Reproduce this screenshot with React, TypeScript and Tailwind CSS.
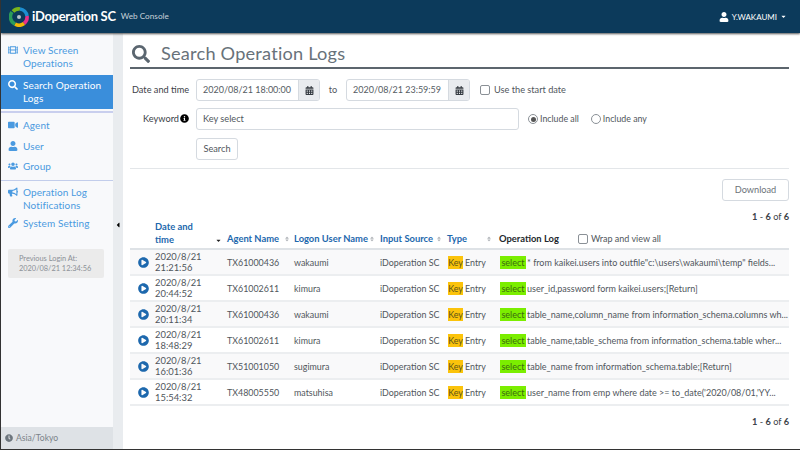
import React from "react";
import { FaSearch, FaFilm, FaVideo, FaUser, FaUsers, FaBullhorn, FaWrench, FaClock, FaCalendarAlt, FaInfoCircle, FaPlayCircle, FaCaretDown, FaSort, FaCaretLeft } from "react-icons/fa";

const rows = [
  ["2020/8/21", "21:21:56", "TX61000436", "wakaumi", "* from kaikei.users into outfile\"c:\\users\\wakaumi\\temp\" fields..."],
  ["2020/8/21", "20:44:52", "TX61002611", "kimura", "user_id,password form kaikei.users;[Return]"],
  ["2020/8/21", "20:11:34", "TX61000436", "wakaumi", "table_name,column_name from information_schema.columns wh..."],
  ["2020/8/21", "18:48:29", "TX61002611", "kimura", "table_name,table_schema from information_schema.table wher..."],
  ["2020/8/21", "16:01:36", "TX51001050", "sugimura", "table_name from information_schema.table;[Return]"],
  ["2020/8/21", "15:54:32", "TX48005550", "matsuhisa", "user_name from emp where date >= to_date('2020/08/01,'YY..."],
];

function Logo() {
  return (
    <svg width="20" height="20" viewBox="0 0 20 20" fill="none" strokeWidth="3.6">
      <path d="M4 4.5 A8 8 0 0 1 11 2" stroke="#7ab51d" />
      <path d="M11 2 A8 8 0 0 1 18 9" stroke="#1d8ed1" />
      <path d="M18 9 A8 8 0 0 1 15 16.5" stroke="#e8318a" />
      <path d="M15 16.5 A8 8 0 0 1 6 17" stroke="#f2b705" />
      <path d="M6 17 A8 8 0 0 1 3 5" stroke="#2b9c5a" />
      <circle cx="10" cy="10" r="2" fill="#b9c4cc" />
    </svg>
  );
}

function Nav({ icon, children, active }: { icon: React.ReactNode; children: React.ReactNode; active?: boolean }) {
  return (
    <div className={`flex pl-[7px] pr-1 py-[4px] leading-[13px] text-[10px] tracking-[0.1px] ${active ? "bg-[#3a8edb] text-white" : "text-[#4a9ae0]"}`}>
      <span className="w-[15px] shrink-0 pt-[1px] text-[10px]">{icon}</span>
      <span>{children}</span>
    </div>
  );
}

function DateInput({ value }: { value: string }) {
  return (
    <div className="flex h-[22px] w-[124px] rounded-[3px] border border-[#d5dae0] overflow-hidden">
      <div className="flex-1 pl-[6px] leading-[20px] text-[9px] text-[#555c63] whitespace-nowrap">{value}</div>
      <div className="w-[21px] bg-[#e9ecef] border-l border-[#d5dae0] flex items-center justify-center text-[#343a40] text-[9px]">
        <FaCalendarAlt />
      </div>
    </div>
  );
}

function Head({ children, right }: { children: React.ReactNode; right: string }) {
  return (
    <th className="font-bold relative whitespace-nowrap text-[9.4px] pb-[3px]">
      {children}
      <FaSort className={`absolute bottom-[6px] text-[6px] text-[#b0b4b8] ${right}`} />
    </th>
  );
}

export default function App() {
  return (
    <div className="w-[800px] h-[450px] overflow-hidden bg-white flex flex-col border-l border-b border-[#333] text-[9.2px] text-[#50565c] whitespace-nowrap" style={{ fontFamily: 'Lato, "Noto Sans", sans-serif' }}>
      <header className="h-[33px] shrink-0 bg-[#0c3a5b] shadow-[0_1px_2px_#555] z-10 flex items-center pl-[8px] pr-[13px] text-white">
        <Logo />
        <span className="ml-[3px] text-[13px] font-bold tracking-[-0.3px]">iDoperation SC</span>
        <span className="ml-[5px] text-[8.2px] text-[#c8d2da]">Web Console</span>
        <div className="ml-auto flex items-center gap-[3px] text-[8px]">
          <FaUser className="text-[10px]" />
          <span>Y.WAKAUMI</span>
          <FaCaretDown className="text-[7px]" />
        </div>
      </header>
      <div className="flex flex-1 min-h-0">
        <aside className="w-[112px] shrink-0 bg-[#f8f9fb] flex flex-col whitespace-normal">
          <div className="pt-[7px]">
            <Nav icon={<FaFilm />}>View Screen Operations</Nav>
          </div>
          <div className="mt-[1px] pb-[2px] border-b-[2px] border-[#c9cfee]">
            <Nav active icon={<FaSearch />}>Search Operation Logs</Nav>
          </div>
          <div className="mt-[2px] pb-[3.5px] border-b border-[#c2cdeb]">
            <div className="h-[20.5px]"><Nav icon={<FaVideo />}>Agent</Nav></div>
            <div className="h-[20.5px]"><Nav icon={<FaUser />}>User</Nav></div>
            <div className="h-[20.5px]"><Nav icon={<FaUsers />}>Group</Nav></div>
          </div>
          <div className="pt-[1px]">
            <Nav icon={<FaBullhorn />}>Operation Log Notifications</Nav>
            <div className="-mt-[3px]"><Nav icon={<FaWrench />}>System Setting</Nav></div>
          </div>
          <div className="ml-[7px] mr-[9px] mt-[15px] h-[29px] rounded-[2px] bg-[#ebebeb] pl-[11px] text-[7.4px] leading-[10px] pt-[5px] text-[#8b9197]">
            <div>Previous Login At:</div>
            <div>2020/08/21 12:34:56</div>
          </div>
          <div className="mt-auto h-[22px] bg-[#dee2e6] flex items-center gap-[3px] pl-[4px] text-[8.6px] text-[#7b8389]">
            <FaClock className="text-[8px] text-[#6c757d]" />
            <span>Asia/Tokyo</span>
          </div>
        </aside>
        <div className="w-[10px] shrink-0 bg-[#e9ecef] flex items-center justify-center text-[8px] text-black">
          <FaCaretLeft className="mt-[-32px]" />
        </div>
        <main className="flex-1 min-w-0 pl-[7px] pr-[11px] pt-[8px]">
          <div className="h-[28px] border-b-2 border-[#5c656d] flex items-center text-[#68727a]">
            <FaSearch className="text-[18px] text-[#5b6670] ml-[2px]" />
            <span className="ml-[11px] text-[18.2px] tracking-[0.2px]">Search Operation Logs</span>
          </div>
          <div className="flex items-center h-[22px] mt-[10px]">
            <label className="w-[66px] pl-[2px] text-[#3c4248]">Date and time</label>
            <DateInput value="2020/08/21 18:00:00" />
            <span className="w-[26px] text-center">to</span>
            <DateInput value="2020/08/21 23:59:59" />
            <span className="ml-[10px] w-[10px] h-[10px] rounded-[2px] border border-[#8a9096]" />
            <span className="ml-[4px]">Use the start date</span>
          </div>
          <div className="flex items-center h-[22px] mt-[7px]">
            <label className="w-[66px] pr-[7px] flex justify-end items-center gap-[1px] text-[#3c4248]">Keyword <FaInfoCircle className="text-[9px] text-black" /></label>
            <div className="w-[323px] h-[22px] border border-[#d5dae0] rounded-[3px] pl-[6px] leading-[20px]">Key select</div>
            <span className="ml-[9px] w-[10px] h-[10px] rounded-full border border-[#8a9096] flex items-center justify-center"><span className="w-[5px] h-[5px] rounded-full bg-[#555]" /></span>
            <span className="ml-[2px] text-[8.8px]">Include all</span>
            <span className="ml-[12px] w-[10px] h-[10px] rounded-full border border-[#8a9096]" />
            <span className="ml-[2px] text-[8.8px]">Include any</span>
          </div>
          <div className="ml-[66px] mt-[8px] w-[42px] h-[22px] border border-[#d5dae0] rounded-[3px] text-center leading-[20px]">Search</div>
          <div className="border-t border-[#e3e6e9] mt-[8px]" />
          <div className="flex justify-end mt-[10px]">
            <div className="w-[67px] h-[22px] border border-[#d5dae0] rounded-[3px] text-center leading-[20px] text-[#6c7379]">Download</div>
          </div>
          <div className="text-right mt-[10px] leading-[12px] text-[#3c4248]"><b>1</b> - <b>6</b> of <b>6</b></div>
          <table className="w-full table-fixed border-collapse mt-[-6px]">
            <colgroup>
              <col className="w-[25px]" /><col className="w-[72px]" /><col className="w-[67px]" /><col className="w-[86px]" /><col className="w-[67px]" /><col className="w-[52px]" /><col />
            </colgroup>
            <thead>
              <tr className="h-[32px] border-b-2 border-[#dee2e6] text-[#1d68ad] text-left leading-[13px] align-bottom">
                <th />
                <th className="relative font-bold whitespace-normal text-[9.4px] pb-[2px]"><span className="block w-[45px]">Date and time</span><FaCaretDown className="absolute right-[5px] bottom-[4px] text-[7px] text-[#222]" /></th>
                <Head right="right-[4px]">Agent Name</Head>
                <Head right="right-[5px]">Logon User Name</Head>
                <Head right="right-[5px]">Input Source</Head>
                <Head right="right-[7px]">Type</Head>
                <th className="font-bold text-[#23282d] text-[9.4px] pb-[3px]">
                  <div className="flex items-center">
                    <span>Operation Log</span>
                    <span className="ml-[19px] w-[10px] h-[10px] rounded-[2px] border border-[#8a9096]" />
                    <span className="ml-[3px] font-normal text-[#50565c] text-[9px]">Wrap and view all</span>
                  </div>
                </th>
              </tr>
            </thead>
            <tbody>
              {rows.map((r, i) => (
                <tr key={i} className={`h-[26px] border-b-2 border-[#eceef0] leading-[11px] text-[8.9px] ${i % 2 === 0 ? "bg-[#f9f9fa]" : "bg-white"}`}>
                  <td className="pl-[8px]"><FaPlayCircle className="text-[11px] text-[#1d68ad]" /></td>
                  <td className="text-[9.4px]"><div>{r[0]}</div><div>{r[1]}</div></td>
                  <td>{r[2]}</td>
                  <td>{r[3]}</td>
                  <td>iDoperation SC</td>
                  <td className="pl-[1px]"><span className="inline-block bg-[#fbc30b] w-[15px] text-center h-[13px] leading-[13px] mr-[2px] text-[#5c5418]">Key</span>Entry</td>
                  <td className="overflow-hidden text-[9px]"><span className="inline-block bg-[#7bee00] w-[26px] text-center h-[13px] leading-[13px] ml-[1px] mr-[1px] text-[#3c6a10]">select</span>{r[4]}</td>
                </tr>
              ))}
            </tbody>
          </table>
          <div className="text-right mt-[10px] leading-[12px] text-[#3c4248]"><b>1</b> - <b>6</b> of <b>6</b></div>
        </main>
      </div>
    </div>
  );
}
